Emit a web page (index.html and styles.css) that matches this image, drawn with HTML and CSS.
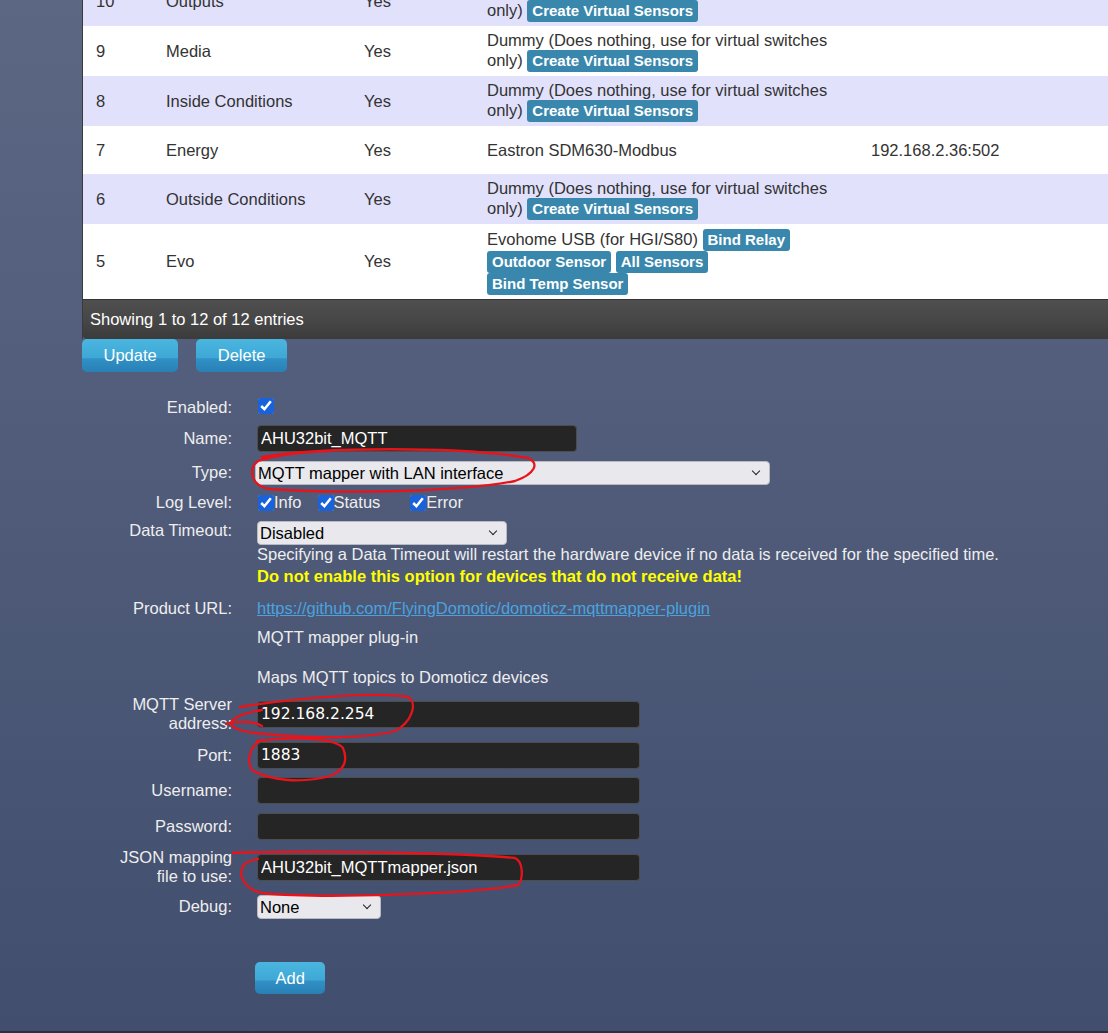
FILE: index.html
```html
<!DOCTYPE html>
<html lang="en">
<head>
<meta charset="utf-8">
<title>Hardware</title>
<link rel="stylesheet" href="styles.css">
</head>
<body>
<div class="page">
  <div class="grid">
    <table class="hwtable">
      <colgroup><col class="c-id"><col class="c-name"><col class="c-en"><col class="c-type"><col></colgroup>
      <tbody>
        <tr class="odd"><td>10</td><td>Outputs</td><td>Yes</td><td class="type">Dummy (Does nothing, use for virtual switches only) <a class="lbl">Create Virtual Sensors</a></td><td></td></tr>
        <tr class="even"><td>9</td><td>Media</td><td>Yes</td><td class="type">Dummy (Does nothing, use for virtual switches only) <a class="lbl">Create Virtual Sensors</a></td><td></td></tr>
        <tr class="odd"><td>8</td><td>Inside Conditions</td><td>Yes</td><td class="type">Dummy (Does nothing, use for virtual switches only) <a class="lbl">Create Virtual Sensors</a></td><td></td></tr>
        <tr class="even"><td>7</td><td>Energy</td><td>Yes</td><td class="type">Eastron SDM630-Modbus</td><td>192.168.2.36:502</td></tr>
        <tr class="odd"><td>6</td><td>Outside Conditions</td><td>Yes</td><td class="type">Dummy (Does nothing, use for virtual switches only) <a class="lbl">Create Virtual Sensors</a></td><td></td></tr>
        <tr class="even"><td>5</td><td>Evo</td><td>Yes</td><td class="type">Evohome USB (for HGI/S80) <a class="lbl">Bind Relay</a> <a class="lbl">Outdoor Sensor</a> <a class="lbl">All Sensors</a> <a class="lbl">Bind Temp Sensor</a></td><td></td></tr>
      </tbody>
    </table>
    <div class="info">Showing 1 to 12 of 12 entries</div>
  </div>

  <div class="actions">
    <button class="btn" type="button">Update</button>
    <button class="btn" type="button">Delete</button>
  </div>

  <form class="hwform">
    <label class="lab">Enabled:</label>
    <div class="ctl"><input type="checkbox" checked></div>

    <label class="lab">Name:</label>
    <div class="ctl"><input class="txt short" type="text" value="AHU32bit_MQTT"></div>

    <label class="lab">Type:</label>
    <div class="ctl"><span class="sel sel-type"><select><option>MQTT mapper with LAN interface</option></select></span></div>

    <label class="lab">Log Level:</label>
    <div class="ctl loglevel">
      <label class="cb cb-info"><input type="checkbox" checked>Info</label>
      <label class="cb cb-status"><input type="checkbox" checked>Status</label>
      <label class="cb"><input type="checkbox" checked>Error</label>
    </div>

    <label class="lab lab-top">Data Timeout:</label>
    <div class="ctl">
      <span class="sel sel-timeout"><select><option>Disabled</option></select></span>
      <div class="help">Specifying a Data Timeout will restart the hardware device if no data is received for the specified time.</div>
      <div class="warn">Do not enable this option for devices that do not receive data!</div>
    </div>

    <label class="lab">Product URL:</label>
    <div class="ctl"><a class="link" href="#">https://github.com/FlyingDomotic/domoticz-mqttmapper-plugin</a></div>

    <div class="lab"></div>
    <div class="ctl desc">MQTT mapper plug-in<br><br>Maps MQTT topics to Domoticz devices</div>

    <label class="lab">MQTT Server address:</label>
    <div class="ctl"><input class="txt num" type="text" value="192.168.2.254"></div>

    <label class="lab">Port:</label>
    <div class="ctl"><input class="txt num" type="text" value="1883"></div>

    <label class="lab">Username:</label>
    <div class="ctl"><input class="txt" type="text" value=""></div>

    <label class="lab">Password:</label>
    <div class="ctl"><input class="txt" type="password" value=""></div>

    <label class="lab">JSON mapping file to use:</label>
    <div class="ctl"><input class="txt" type="text" value="AHU32bit_MQTTmapper.json"></div>

    <label class="lab">Debug:</label>
    <div class="ctl"><span class="sel sel-debug"><select><option>None</option></select></span></div>
  </form>

  <div class="add-row"><button class="btn" type="button">Add</button></div>

  <svg class="marks" width="1108" height="1033" viewBox="0 0 1108 1033" aria-hidden="true">
    <path d="M 262 457 C 320 447, 460 446, 528 458 C 540 463, 535 474, 515 481 C 460 492, 340 494, 270 489 C 250 486, 248 468, 258 461 C 275 455, 300 452, 330 451"/>
    <path d="M 240 707 C 300 697, 380 692, 408 697 C 418 703, 412 722, 395 731 C 360 740, 300 738, 255 733 C 240 731, 228 727, 232 721 C 236 716, 250 712, 262 710"/>
    <path d="M 226 724 C 240 720, 256 722, 262 726"/>
    <path d="M 257 741 C 290 736, 335 738, 343 748 C 348 760, 345 770, 330 776 C 300 784, 268 780, 252 770 C 246 760, 250 745, 262 740"/>
    <path d="M 233 853 C 300 850, 470 853, 515 858 C 524 862, 523 880, 518 885 C 470 894, 320 899, 262 893 C 244 889, 238 876, 243 866 C 246 862, 252 860, 258 859"/>
  </svg>
</div>
</body>
</html>
```

FILE: styles.css
```css
html, body {
  margin: 0;
  padding: 0;
}

body {
  font-family: "Liberation Sans", Arial, sans-serif;
  background: #414e6d;
}

.page {
  position: relative;
  height: 1031px;
  border-bottom: 2px solid #2a3042;
  background: linear-gradient(#5c6784, #414e6d);
  overflow: hidden;
}

/* ---------- hardware table ---------- */
.grid {
  margin: -24px 0 0 82px;
  width: 1040px;
  border-left: 1px solid #3a3a3a;
}

.hwtable {
  width: 100%;
  border-collapse: collapse;
  table-layout: fixed;
  font-size: 16.5px;
  color: #333;
}

.c-id { width: 75px; }
.c-name { width: 198px; }
.c-en { width: 123px; }
.c-type { width: 384px; }

.hwtable tr { height: 48px; }

.hwtable td {
  padding: 4.5px 8px;
  line-height: 19px;
  vertical-align: middle;
}

.hwtable td:first-child { padding-left: 13px; }
.hwtable td.type { padding-right: 26px; }

.odd td { background: #e1e1fc; }
.even td { background: #ffffff; }

.lbl {
  display: inline-block;
  font: bold 15px/17px "Liberation Sans", Arial, sans-serif;
  color: #fff;
  background: #3a87ad;
  padding: 2px 5px 3px;
  border-radius: 3px;
}

.info {
  height: 40px;
  box-sizing: border-box;
  border-top: 1px solid #333;
  background: linear-gradient(#4f4f4f, #464646 55%, #3b3b3b);
  color: #fff;
  font-size: 16.5px;
  line-height: 39px;
  padding-left: 7px;
  border-bottom-left-radius: 4px;
}

/* ---------- buttons ---------- */
.actions {
  display: flex;
  gap: 18px;
  margin-left: 82px;
}

.btn {
  height: 33px;
  padding: 0 21.5px;
  border: 0;
  border-radius: 5px;
  color: #fff;
  font: 16.5px "Liberation Sans", Arial, sans-serif;
  background: linear-gradient(#4ab6df 0%, #3fa8d6 56%, #3090c5 60%, #2980b5 100%);
  cursor: pointer;
}

.add-row {
  margin: 43.5px 0 0 255px;
}
.add-row .btn { height: 32px; padding: 0 20.5px; }

/* ---------- form ---------- */
.hwform {
  display: grid;
  grid-template-columns: 125px 1fr;
  column-gap: 25px;
  row-gap: 8.5px;
  padding-left: 107px;
  margin-top: 25.5px;
  color: #eee;
  font-size: 16.5px;
  line-height: 19px;
  align-items: center;
}

.lab { text-align: right; }
.lab-top { align-self: start; }

.ctl { min-height: 19px; }

input[type="checkbox"] {
  width: 16px;
  height: 16px;
  margin: 0;
  accent-color: #1a62d9;
  vertical-align: middle;
}

.ctl > input[type="checkbox"] { display: block; margin-left: 1px; }

.loglevel { display: flex; align-items: center; }
.cb { display: inline-flex; align-items: center; }
.cb input { margin-left: 1px; }
.cb-info { margin-right: 15px; }
.cb-status { margin-right: 29px; }

.txt {
  display: block;
  box-sizing: border-box;
  height: 27px;
  width: 383px;
  background: #252525;
  border: 1px solid #4d4d4d;
  border-radius: 4px;
  color: #fff;
  font: 16.5px "Liberation Sans", Arial, sans-serif;
  padding: 0 3px;
  outline: none;
}
.txt.short { width: 320px; }
.txt.num { font-family: "DejaVu Sans", Verdana, sans-serif; font-size: 15.5px; }

.sel {
  position: relative;
  display: block;
}
.sel select {
  appearance: none;
  -webkit-appearance: none;
  display: block;
  width: 100%;
  height: 24px;
  box-sizing: border-box;
  background: #e9e9ed;
  border: 1px solid #b9b9c2;
  border-radius: 4px;
  color: #000;
  font: 16.5px "Liberation Sans", Arial, sans-serif;
  padding: 0 24px 0 2px;
  outline: none;
}
.sel::after {
  content: "";
  position: absolute;
  right: 11px;
  top: 7px;
  width: 5px;
  height: 5px;
  border-right: 1.5px solid #222;
  border-bottom: 1.5px solid #222;
  transform: rotate(45deg);
  pointer-events: none;
}
.sel-type { width: 515px; margin-left: -2px; }
.sel-timeout { width: 250px; }
.sel-debug { width: 124px; }

.help { white-space: nowrap; }
.warn {
  color: #ffff00;
  font-weight: bold;
  margin: 3px 0 5px;
}

.link {
  color: #4aa3df;
  text-decoration: underline;
}

.desc { line-height: 20px; }

/* ---------- red hand-drawn annotations ---------- */
.marks {
  position: absolute;
  top: 0;
  left: 0;
  pointer-events: none;
}
.marks path {
  fill: none;
  stroke: #e8141b;
  stroke-width: 2.3;
  stroke-linecap: round;
  stroke-linejoin: round;
}
```
